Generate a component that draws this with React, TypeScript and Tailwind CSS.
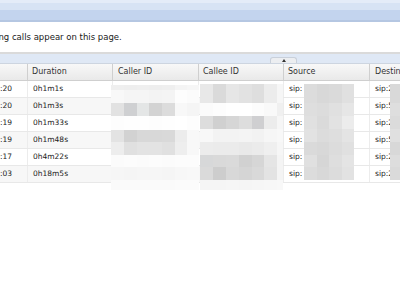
import React from "react";

type Band = { y: number; h: number; c: string[] };

const callerX = [111, 124, 137, 149, 162, 175, 187];
const callerW = [13, 13, 12, 13, 13, 12, 12];
const callerBands: Band[] = [
  { y: 85, h: 5, c: ["#efefef", "#eeeeee", "#efefef", "#eeeeee", "#efefef", "#f4f4f4", "#f6f6f6"] },
  { y: 90, h: 13, c: ["#f8f8f8", "#f5f5f5", "#f5f5f5", "#f3f3f3", "#f4f4f4", "#fdfdfd", "#fbfbfb"] },
  { y: 103, h: 13, c: ["#e2e2e2", "#cfd0d2", "#e4e6e6", "#d3d3d3", "#dcdcdc", "#f8f8f8", "#f5f5f5"] },
  { y: 116, h: 14, c: ["#fdfdfd", "#fefefe", "#fefefe", "#fdfdfd", "#fefefe", "#ffffff", "#fdfdfd"] },
  { y: 130, h: 12, c: ["#e3e3e3", "#d2d2d2", "#d8d8d8", "#d8d8d8", "#d9d9d9", "#ececec", "#f8f8f8"] },
  { y: 142, h: 13, c: ["#ededed", "#e0e0e0", "#e3e3e3", "#e3e3e3", "#e0e0e0", "#eeeeee", "#f8f8f8"] },
  { y: 155, h: 12, c: ["#fbfbfb", "#fcfcfc", "#fbfbfb", "#fcfcfc", "#fbfbfb", "#fcfcfc", "#fcfcfc"] },
  { y: 167, h: 13, c: ["#f6f6f6", "#f5f5f5", "#f6f6f6", "#f6f6f6", "#f5f5f5", "#f7f7f7", "#f8f8f8"] },
  { y: 180, h: 10, c: ["#fafafa", "#fafafa", "#fafafa", "#fafafa", "#fafafa", "#fbfbfb", "#fbfbfb"] },
];

const calleeX = [200, 213, 226, 239, 252, 264, 277];
const calleeW = [13, 13, 13, 13, 12, 13, 6];
const calleeBands: Band[] = [
  { y: 84, h: 19, c: ["#e8e8e8", "#dadada", "#e6e6e6", "#e2e2e2", "#dedede", "#ececec", "#f6f6f6"] },
  { y: 103, h: 13, c: ["#fbfbfb", "#fdfdfd", "#ffffff", "#ffffff", "#fcfcfc", "#f9f9f9", "#f0f0f0"] },
  { y: 116, h: 13, c: ["#dddddd", "#d0d0d0", "#d6d6d6", "#dddddd", "#cfcfd1", "#ececec", "#f6f6f6"] },
  { y: 129, h: 13, c: ["#f8f8f8", "#f3f3f3", "#f3f3f3", "#f4f4f4", "#f2f2f2", "#f6f6f6", "#f8f8f8"] },
  { y: 142, h: 13, c: ["#ececec", "#ebebeb", "#ebebeb", "#e9e9e9", "#ebebeb", "#efefef", "#f6f6f6"] },
  { y: 155, h: 12, c: ["#d7d8d9", "#d9d9d9", "#dadada", "#d1d1d1", "#d6d6d6", "#e5e5e5", "#f4f4f4"] },
  { y: 167, h: 13, c: ["#dadada", "#cdcdcd", "#d8d8d8", "#d5d5d5", "#d9d9d9", "#e3e3e3", "#f4f4f4"] },
  { y: 180, h: 10, c: ["#f5f5f5", "#f5f5f5", "#f6f6f6", "#f5f5f5", "#f6f6f6", "#f7f7f7", "#f8f8f8"] },
];

const sourceX = [304, 317, 329, 342];
const sourceW = [13, 12, 13, 12];
const sourceBands: Band[] = [
  { y: 84, h: 19, c: ["#dcdcdc", "#d8d8d8", "#dadada", "#e0e0e0"] },
  { y: 103, h: 13, c: ["#dedede", "#dcdcdc", "#e0e0e0", "#e6e6e6"] },
  { y: 116, h: 13, c: ["#e0e0e0", "#dadada", "#e2e2e2", "#ececec"] },
  { y: 129, h: 13, c: ["#e2e2e2", "#dcdcdc", "#dedede", "#e4e4e4"] },
  { y: 142, h: 13, c: ["#dadada", "#d8d8d8", "#dcdcdc", "#e0e0e0"] },
  { y: 155, h: 12, c: ["#e0e0e0", "#d6d6d6", "#dedede", "#e4e4e4"] },
  { y: 167, h: 13, c: ["#dcdcdc", "#d8d8d8", "#dcdcdc", "#e2e2e2"] },
];

const destBands: Band[] = [
  { y: 84, h: 19, c: ["#d9d9d9"] },
  { y: 103, h: 13, c: ["#dedede"] },
  { y: 116, h: 13, c: ["#dbdbdb"] },
  { y: 129, h: 13, c: ["#e0e0e0"] },
  { y: 142, h: 13, c: ["#d8d8d8"] },
  { y: 155, h: 12, c: ["#dddddd"] },
  { y: 167, h: 13, c: ["#dadada"] },
];

function Mosaic({ xs, ws, bands }: { xs: number[]; ws: number[]; bands: Band[] }) {
  return (
    <>
      {bands.map((b, bi) =>
        xs.map((x, i) => (
          <rect key={`${bi}-${i}`} x={x} y={b.y} width={ws[i]} height={b.h} fill={b.c[i]} />
        ))
      )}
    </>
  );
}

const rows = [
  { t: "10:43:20", d: "0h1m1s", dest: "sip:2" },
  { t: "10:41:20", d: "0h1m3s", dest: "sip:5" },
  { t: "10:38:19", d: "0h1m33s", dest: "sip:2" },
  { t: "10:35:19", d: "0h1m48s", dest: "sip:5" },
  { t: "10:30:17", d: "0h4m22s", dest: "sip:2" },
  { t: "10:12:03", d: "0h18m5s", dest: "sip:2" },
];

export default function App() {
  return (
    <div className="relative w-[400px] h-[284px] overflow-hidden bg-white font-['DejaVu_Sans','Verdana',sans-serif] text-[#222]">
      {/* top bar */}
      <div className="h-[3px] bg-[#e4ecf8]" />
      <div className="h-[7px] bg-[#d7e3f4]" />
      <div className="h-[10px] bg-[#c3d4ee]" />
      <div className="h-[2px] bg-[#b5c7e2]" />

      {/* message */}
      <div className="h-[30px] flex items-center overflow-hidden">
        <span className="ml-[-52px] whitespace-nowrap text-[8.5px] leading-none text-[#1a1a1a]">
          Only incoming calls appear on this page.
        </span>
      </div>

      <div className="h-[2px] bg-[#dadada]" />

      {/* blue band with collapse tab */}
      <div className="relative h-[9px] bg-[#dfe8f5]">
        <div className="absolute left-[270px] top-[3px] w-[27px] h-[6px] rounded-t-[3px] border border-b-0 border-[#c9d0da] bg-[#eceef1] flex justify-center">
          <div className="mt-[1px] w-0 h-0 border-l-[2px] border-r-[2px] border-b-[3px] border-l-transparent border-r-transparent border-b-[#333]" />
        </div>
      </div>

      {/* header row */}
      <div className="flex h-[18px] border-t border-[#cdd5e0] border-b border-b-[#cfcfcf] bg-linear-to-b from-[#f8f8f8] to-[#e9e9e9] text-[8px] text-[#333] leading-none">
        <div className="w-[28px] shrink-0 border-r border-[#cfcfcf]" />
        <div className="w-[85px] shrink-0 border-r border-[#cfcfcf] flex items-center pl-[4px]">Duration</div>
        <div className="w-[86px] shrink-0 border-r border-[#cfcfcf] flex items-center pl-[5px]">Caller ID</div>
        <div className="w-[85px] shrink-0 border-r border-[#cfcfcf] flex items-center pl-[4px]">Callee ID</div>
        <div className="w-[86px] shrink-0 border-r border-[#cfcfcf] flex items-center pl-[4px]">Source</div>
        <div className="flex-1 flex items-center pl-[5px] whitespace-nowrap overflow-hidden">Destination</div>
      </div>

      {/* data rows */}
      {rows.map((r, i) => (
        <div
          key={i}
          className={`flex h-[17px] border-b border-[#e8e8e8] text-[7.5px] leading-none ${i % 2 === 1 ? "bg-[#f7f7f7]" : "bg-white"}`}
        >
          <div className="w-[28px] shrink-0 border-r border-[#ececec] flex items-center justify-end overflow-hidden pr-[15px] whitespace-nowrap">
            {r.t}
          </div>
          <div className="w-[85px] shrink-0 border-r border-[#ececec] flex items-center pl-[5px]">{r.d}</div>
          <div className="w-[86px] shrink-0 border-r border-[#ececec]" />
          <div className="w-[85px] shrink-0 border-r border-[#ececec]" />
          <div className="w-[86px] shrink-0 border-r border-[#ececec] flex items-center pl-[5px] bg-white">sip:</div>
          <div className="flex-1 flex items-center pl-[5px] bg-white whitespace-nowrap overflow-hidden">{r.dest}</div>
        </div>
      ))}

      {/* pixelated redaction over the identifiers */}
      <svg
        className="absolute left-0 top-0 pointer-events-none"
        width={400}
        height={284}
        viewBox="0 0 400 284"
      >
        <Mosaic xs={callerX} ws={callerW} bands={callerBands} />
        <Mosaic xs={calleeX} ws={calleeW} bands={calleeBands} />
        <Mosaic xs={sourceX} ws={sourceW} bands={sourceBands} />
        <Mosaic xs={[390]} ws={[10]} bands={destBands} />
      </svg>
    </div>
  );
}
